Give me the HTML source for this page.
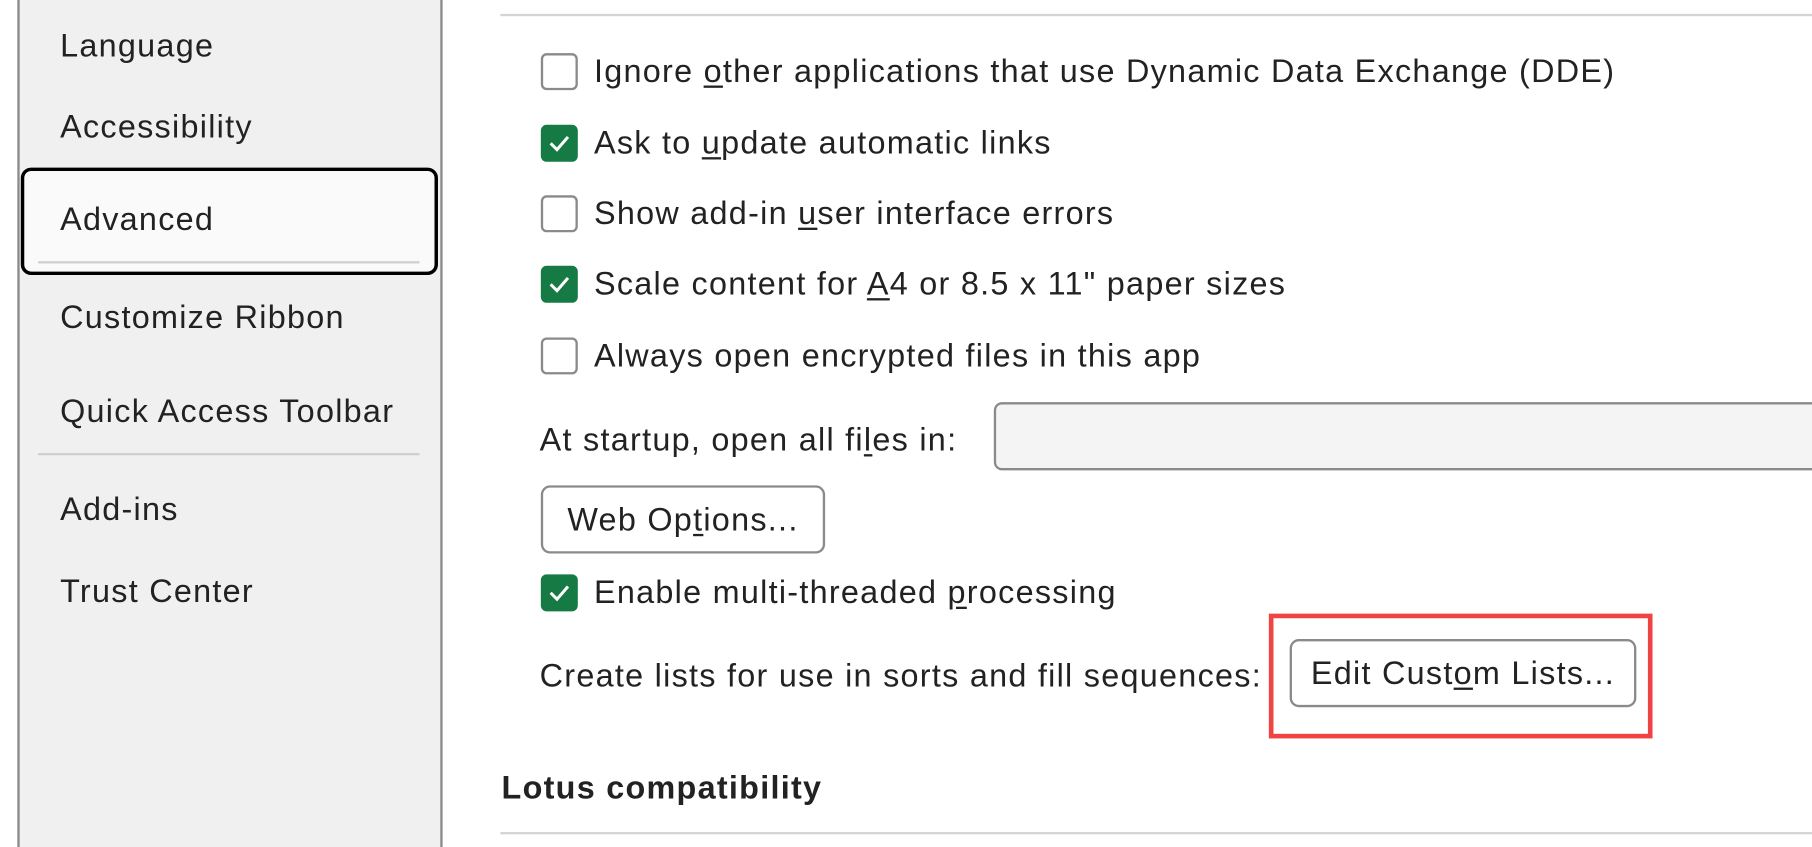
<!DOCTYPE html>
<html><head><meta charset="utf-8"><style>
html,body{margin:0;padding:0;background:#fff;overflow:hidden;width:1812px;height:847px}
#w{position:absolute;left:0;top:0;width:1568px;height:733px;transform:scale(1.15561);transform-origin:0 0;font-family:"Liberation Sans",sans-serif;color:#222;letter-spacing:1.1px}
.a{position:absolute;white-space:nowrap}
.side{position:absolute;left:15px;top:0;width:364px;height:733px;background:#f0f0f0;border-left:2px solid #8a8a8a;border-right:2px solid #8a8a8a}
.si{position:absolute;left:52px;font-size:28px;line-height:30px}
.cb{position:absolute;left:468px;width:28px;height:28px;border:2px solid #8a8a8a;border-radius:5px;background:#fff}
.ck{position:absolute;left:468px;width:32px;height:32px;border-radius:5px;background:#157a44}
.ck svg{position:absolute;left:0;top:0}
.t{position:absolute;left:514px;font-size:28px;line-height:30px;white-space:nowrap}
.btn{position:absolute;border:2px solid #8a8a8a;border-radius:8px;background:#fff;font-size:28px;box-sizing:border-box;text-align:center;white-space:nowrap}
u{text-decoration:underline;text-underline-offset:3px}
</style></head><body><div id="w">
<div class="side"></div>
<div class="si" style="top:25px">Language</div>
<div class="si" style="top:95px">Accessibility</div>
<div class="a" style="left:18px;top:145px;width:355px;height:87px;border:3px solid #000;border-radius:9px;background:#fafafa"></div>
<div class="a" style="left:33px;top:226px;width:330px;height:2px;background:#d0d0d0"></div>
<div class="si" style="top:175px">Advanced</div>
<div class="si" style="top:260px">Customize Ribbon</div>
<div class="si" style="top:341px">Quick Access Toolbar</div>
<div class="a" style="left:33px;top:392px;width:330px;height:2px;background:#d0d0d0"></div>
<div class="si" style="top:426px">Add-ins</div>
<div class="si" style="top:497px">Trust Center</div>

<div class="a" style="left:433px;top:12px;width:1135px;height:2px;background:#d4d4d4"></div>

<div class="cb" style="top:46px"></div>
<div class="t" style="top:47px">Ignore <u>o</u>ther applications that use Dynamic Data Exchange (DDE)</div>
<div class="ck" style="top:108px"><svg width="32" height="32"><path d="M8.5 16l5.5 5.5 9.5-11" fill="none" stroke="#fff" stroke-width="2.6"/></svg></div>
<div class="t" style="top:109px">Ask to <u>u</u>pdate automatic links</div>
<div class="cb" style="top:169px"></div>
<div class="t" style="top:170px">Show add-in <u>u</u>ser interface errors</div>
<div class="ck" style="top:230px"><svg width="32" height="32"><path d="M8.5 16l5.5 5.5 9.5-11" fill="none" stroke="#fff" stroke-width="2.6"/></svg></div>
<div class="t" style="top:231px">Scale content for <u>A</u>4 or 8.5 x 11" paper sizes</div>
<div class="cb" style="top:292px"></div>
<div class="t" style="top:293px">Always open encrypted files in this app</div>

<div class="t" style="left:467px;top:366px">At startup, open all fi<u>l</u>es in:</div>
<div class="a" style="left:860px;top:348px;width:720px;height:59px;box-sizing:border-box;border:2px solid #8a8a8a;border-radius:7px;background:#f4f4f4"></div>

<div class="btn" style="left:468px;top:420px;width:246px;height:59px;line-height:55px">Web Op<u>t</u>ions...</div>

<div class="ck" style="top:497px"><svg width="32" height="32"><path d="M8.5 16l5.5 5.5 9.5-11" fill="none" stroke="#fff" stroke-width="2.6"/></svg></div>
<div class="t" style="top:498px">Enable multi-threaded <u>p</u>rocessing</div>

<div class="t" style="left:467px;top:570px">Create lists for use in sorts and fill sequences:</div>
<div class="a" style="left:1098px;top:531px;width:324px;height:100px;border:4px solid #f04444"></div>
<div class="btn" style="left:1116px;top:553px;width:300px;height:59px;line-height:55px">Edit Cust<u>o</u>m Lists...</div>

<div class="a" style="left:434px;top:667px;font-size:28px;font-weight:bold;line-height:30px">Lotus compatibility</div>
<div class="a" style="left:433px;top:720px;width:1135px;height:2px;background:#d4d4d4"></div>
</div></body></html>
